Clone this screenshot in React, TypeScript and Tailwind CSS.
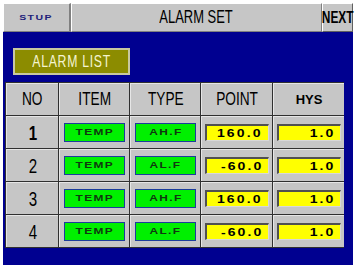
import React from "react";

type Row = {
  no: string;
  item: string;
  type: string;
  point: string;
  hys: string;
};

const rows: Row[] = [
  { no: "1", item: "TEMP", type: "AH.F", point: "160.0", hys: "1.0" },
  { no: "2", item: "TEMP", type: "AL.F", point: "-60.0", hys: "1.0" },
  { no: "3", item: "TEMP", type: "AH.F", point: "160.0", hys: "1.0" },
  { no: "4", item: "TEMP", type: "AL.F", point: "-60.0", hys: "1.0" },
];

const sans = "font-['Liberation_Sans',Arial,sans-serif]";

// tall condensed lettering used for headers and titles
function Narrow({ children, className = "" }: { children: React.ReactNode; className?: string }) {
  return (
    <span className={`inline-block origin-center scale-x-[0.72] whitespace-nowrap ${sans} ${className}`}>{children}</span>
  );
}

// small extended lettering used inside the value boxes
function Wide({ children, className = "" }: { children: React.ReactNode; className?: string }) {
  return (
    <span className={`inline-block scale-x-[1.4] whitespace-nowrap font-bold tracking-[1px] ${sans} ${className}`}>
      {children}
    </span>
  );
}

function Cell({ children, className = "" }: { children: React.ReactNode; className?: string }) {
  return (
    <div
      className={`flex h-[32px] items-center justify-center border-t border-l border-t-[#e6e6e6] border-l-[#e6e6e6] bg-[#c6c6c6] ${className}`}
    >
      {children}
    </div>
  );
}

function GreenBox({ text }: { text: string }) {
  return (
    <div className="flex h-[19px] w-[61px] items-center justify-center border border-[#1c3c9c] bg-[#00f000]">
      <Wide className="text-[8.5px] text-[#103810]">{text}</Wide>
    </div>
  );
}

function YellowBox({ text }: { text: string }) {
  return (
    <div className="flex h-[17px] w-[64px] items-center justify-end border-t-2 border-l-2 border-r border-b border-t-[#505050] border-l-[#505050] border-r-[#d8d8d8] border-b-[#d8d8d8] bg-[#ffff00] pr-[5px]">
      <span
        className={`inline-block origin-right scale-x-[1.4] whitespace-nowrap text-[10px] font-bold tracking-[1.5px] text-black ${sans}`}
      >
        {text}
      </span>
    </div>
  );
}

export default function App() {
  return (
    <div className="h-[271px] w-[358px] bg-white pl-[3px] pt-[3px]">
      <div className="flex w-[350px] flex-col">
        {/* top bar */}
        <div className="flex h-[29px] bg-[#c6c6c6]">
          <div className="flex w-[68px] items-center justify-center border-t border-l border-r-2 border-b border-t-white border-l-white border-r-[#808080] border-b-[#808080]">
            <Wide className="text-[7.5px] text-[#20207a]">STUP</Wide>
          </div>
          <div className="flex flex-1 items-center justify-center border-t border-l border-r border-b border-t-white border-l-white border-r-[#808080] border-b-[#808080]">
            <Narrow className="text-[18px] text-black">ALARM SET</Narrow>
          </div>
          <div className="flex w-[31px] items-center justify-center border-t border-l border-r border-b border-t-white border-l-white border-r-[#606060] border-b-[#606060]">
            <span className="inline-flex w-[24px] justify-center">
              <span className={`inline-block scale-x-[0.7] whitespace-nowrap text-[17px] font-bold text-black ${sans}`}>
                NEXT
              </span>
            </span>
          </div>
        </div>

        {/* body */}
        <div className="h-[233px] bg-[#000090] pl-[2px] pt-[16px]">
          <div className="ml-[8px] flex h-[27px] w-[117px] items-center justify-center border-2 border-[#c8c8a0] bg-[#8c8c00]">
            <Narrow className="text-[17px] tracking-[1px] text-[#f4f4d0]">ALARM LIST</Narrow>
          </div>

          <div className="mt-[7px] grid w-[339px] grid-cols-[52px_70px_70px_71px_71px] gap-px border border-[#303030] bg-[#303030]">
            <Cell>
              <Narrow className="text-[19px] text-black">NO</Narrow>
            </Cell>
            <Cell>
              <Narrow className="text-[19px] text-black">ITEM</Narrow>
            </Cell>
            <Cell>
              <Narrow className="text-[19px] text-black">TYPE</Narrow>
            </Cell>
            <Cell>
              <Narrow className="text-[19px] text-black">POINT</Narrow>
            </Cell>
            <Cell>
              <span className={`text-[13px] font-bold text-black ${sans}`}>HYS</span>
            </Cell>
            {rows.map((r) => (
              <React.Fragment key={r.no}>
                <Cell>
                  <Narrow className={`text-[21px] text-black ${r.no === "1" ? "font-bold" : ""}`}>{r.no}</Narrow>
                </Cell>
                <Cell>
                  <GreenBox text={r.item} />
                </Cell>
                <Cell>
                  <GreenBox text={r.type} />
                </Cell>
                <Cell>
                  <YellowBox text={r.point} />
                </Cell>
                <Cell>
                  <YellowBox text={r.hys} />
                </Cell>
              </React.Fragment>
            ))}
          </div>
        </div>
      </div>
    </div>
  );
}
